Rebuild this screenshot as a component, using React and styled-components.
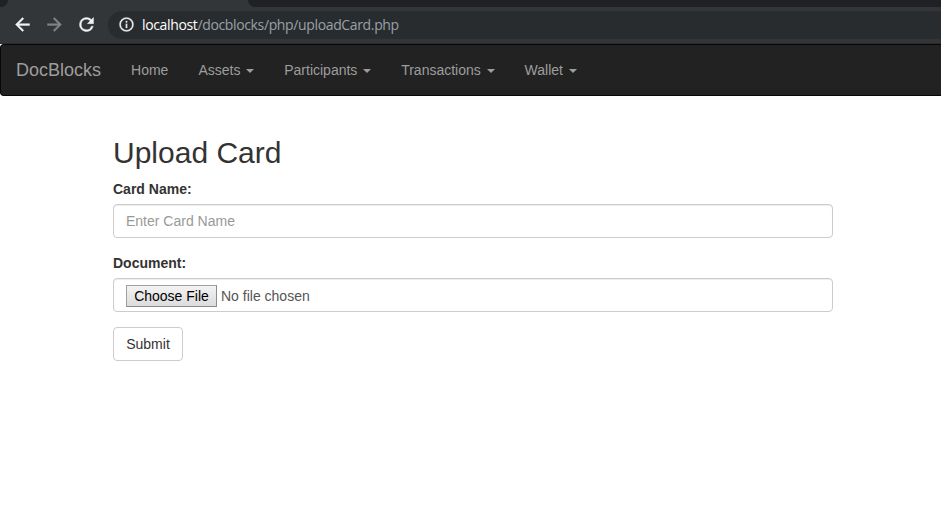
import React from "react";
import styled, { createGlobalStyle } from "styled-components";

const GlobalStyle = createGlobalStyle`
  *, *::before, *::after { box-sizing: border-box; }
  body {
    margin: 0;
    background: #fff;
    color: #333;
    font: 14px/20px "Liberation Sans", Arial, sans-serif;
    overflow: hidden;
  }
`;

const Window = styled.div`
  height: 510px;
  overflow: hidden;
`;

const TabStrip = styled.div`
  display: flex;
  height: 7px;
  background: #323639;
`;

const TabGap = styled.div`
  background: #202124;
  width: ${(p) => (p.$rest ? "auto" : "8px")};
  flex: ${(p) => (p.$rest ? "1" : "none")};
  border-radius: ${(p) => (p.$rest ? "0 0 0 8px" : "0 0 8px 0")};
`;

const ActiveTab = styled.div`
  width: 240px;
`;

const Toolbar = styled.div`
  display: flex;
  align-items: center;
  height: 37px;
  padding: 0 0 1px 11.5px;
  background: #323639;
  border-bottom: 1px solid #292b2d;
`;

const ToolIcon = styled.svg`
  flex: none;
  width: 21px;
  height: 21px;
  margin-right: 11px;
  fill: ${(p) => (p.$muted ? "#808386" : "#f1f3f4")};
  stroke: ${(p) => (p.$muted ? "#808386" : "#f1f3f4")};
  stroke-width: 0.5;
`;

const AddressBar = styled.div`
  display: flex;
  align-items: center;
  flex: 1;
  height: 28px;
  margin-left: 0.5px;
  padding-left: 9.5px;
  border-radius: 14px 0 0 14px;
  background: #282c2f;
`;

const InfoIcon = styled.svg`
  flex: none;
  width: 17px;
  height: 17px;
  fill: #e8eaed;
  stroke: #e8eaed;
  stroke-width: 0.4;
`;

const Url = styled.span`
  margin-left: 7.5px;
  font: 14px/20px "Open Sans", sans-serif;
  letter-spacing: -0.36px;
  color: #9aa0a6;
  white-space: nowrap;
`;

const Host = styled.span`
  color: #fff;
`;

const Navbar = styled.nav`
  display: flex;
  height: 52px;
  padding-left: 0;
  border: 1px solid #080808;
  border-right: 0;
  border-radius: 4px 0 0 4px;
  background: #222;
`;

const Brand = styled.a`
  padding: 15px;
  font-size: 18px;
  line-height: 20px;
  color: #9d9d9d;
`;

const NavLink = styled.a`
  padding: 15px;
  line-height: 20px;
  color: #9d9d9d;
  white-space: nowrap;
`;

const Caret = styled.span`
  display: inline-block;
  width: 0;
  height: 0;
  margin-left: 5.8px;
  vertical-align: middle;
  border-top: 4px solid;
  border-right: 4px solid transparent;
  border-left: 4px solid transparent;
`;

const Form = styled.form`
  width: 720px;
  margin: 40px 0 0 113px;
`;

const Title = styled.h2`
  margin: 0 0 10px;
  font-size: 30px;
  font-weight: 500;
  line-height: 33px;
`;

const Field = styled.div`
  margin-bottom: 15px;
`;

const Label = styled.label`
  display: block;
  margin-bottom: 5px;
  font-weight: bold;
`;

const controlBox = `
  width: 100%;
  height: 34px;
  padding: 6px 12px;
  border: 1px solid #ccc;
  border-radius: 4px;
  background: #fff;
  box-shadow: inset 0 1px 1px rgba(0, 0, 0, 0.075);
  color: #555;
`;

const TextInput = styled.input`
  ${controlBox}
  display: block;
  font: inherit;
  &::placeholder { color: #999; opacity: 1; }
`;

const FilePicker = styled.div`
  ${controlBox}
  display: flex;
  align-items: flex-start;
  line-height: 22px;
`;

const ChooseButton = styled.button`
  width: 91px;
  height: 22px;
  margin-right: 4px;
  padding: 0;
  border: 1px solid #a0a0a0;
  border-right-color: #8c8c8c;
  border-bottom-color: #8c8c8c;
  background: linear-gradient(#f3f3f3, #dcdcdc);
  color: #000;
  font: 14px/20px "Liberation Sans", Arial, sans-serif;
`;

const SubmitButton = styled.button`
  display: block;
  width: 70px;
  height: 34px;
  padding: 6px 0;
  border: 1px solid #ccc;
  border-radius: 4px;
  background: #fff;
  color: #333;
  font: inherit;
`;

const menus = ["Assets", "Participants", "Transactions", "Wallet"];

export default function App() {
  return (
    <Window>
      <GlobalStyle />
      <TabStrip>
        <TabGap />
        <ActiveTab />
        <TabGap $rest />
      </TabStrip>
      <Toolbar>
        <ToolIcon viewBox="0 0 24 24">
          <path d="M20 11H7.83l5.59-5.59L12 4l-8 8 8 8 1.41-1.41L7.83 13H20v-2z" />
        </ToolIcon>
        <ToolIcon viewBox="0 0 24 24" $muted>
          <path d="M12 4l-1.41 1.41L16.17 11H4v2h12.17l-5.58 5.59L12 20l8-8z" />
        </ToolIcon>
        <ToolIcon viewBox="0 0 24 24">
          <path d="M17.65 6.35A7.96 7.96 0 0 0 12 4a8 8 0 1 0 7.73 10h-2.08A6 6 0 1 1 12 6c1.66 0 3.14.69 4.22 1.78L13 11h7V4z" />
        </ToolIcon>
        <AddressBar>
          <InfoIcon viewBox="0 0 24 24">
            <path d="M11 17h2v-6h-2zm1-15a10 10 0 1 0 0 20 10 10 0 0 0 0-20zm0 18a8 8 0 1 1 0-16 8 8 0 0 1 0 16zM11 9h2V7h-2z" />
          </InfoIcon>
          <Url>
            <Host>localhost</Host>/docblocks/php/uploadCard.php
          </Url>
        </AddressBar>
      </Toolbar>
      <Navbar>
        <Brand>DocBlocks</Brand>
        <NavLink>Home</NavLink>
        {menus.map((name) => (
          <NavLink key={name}>
            {name}
            <Caret />
          </NavLink>
        ))}
      </Navbar>
      <Form>
        <Title>Upload Card</Title>
        <Field>
          <Label htmlFor="card">Card Name:</Label>
          <TextInput id="card" placeholder="Enter Card Name" />
        </Field>
        <Field>
          <Label>Document:</Label>
          <FilePicker>
            <ChooseButton type="button">Choose File</ChooseButton>
            No file chosen
          </FilePicker>
        </Field>
        <SubmitButton type="button">Submit</SubmitButton>
      </Form>
    </Window>
  );
}
